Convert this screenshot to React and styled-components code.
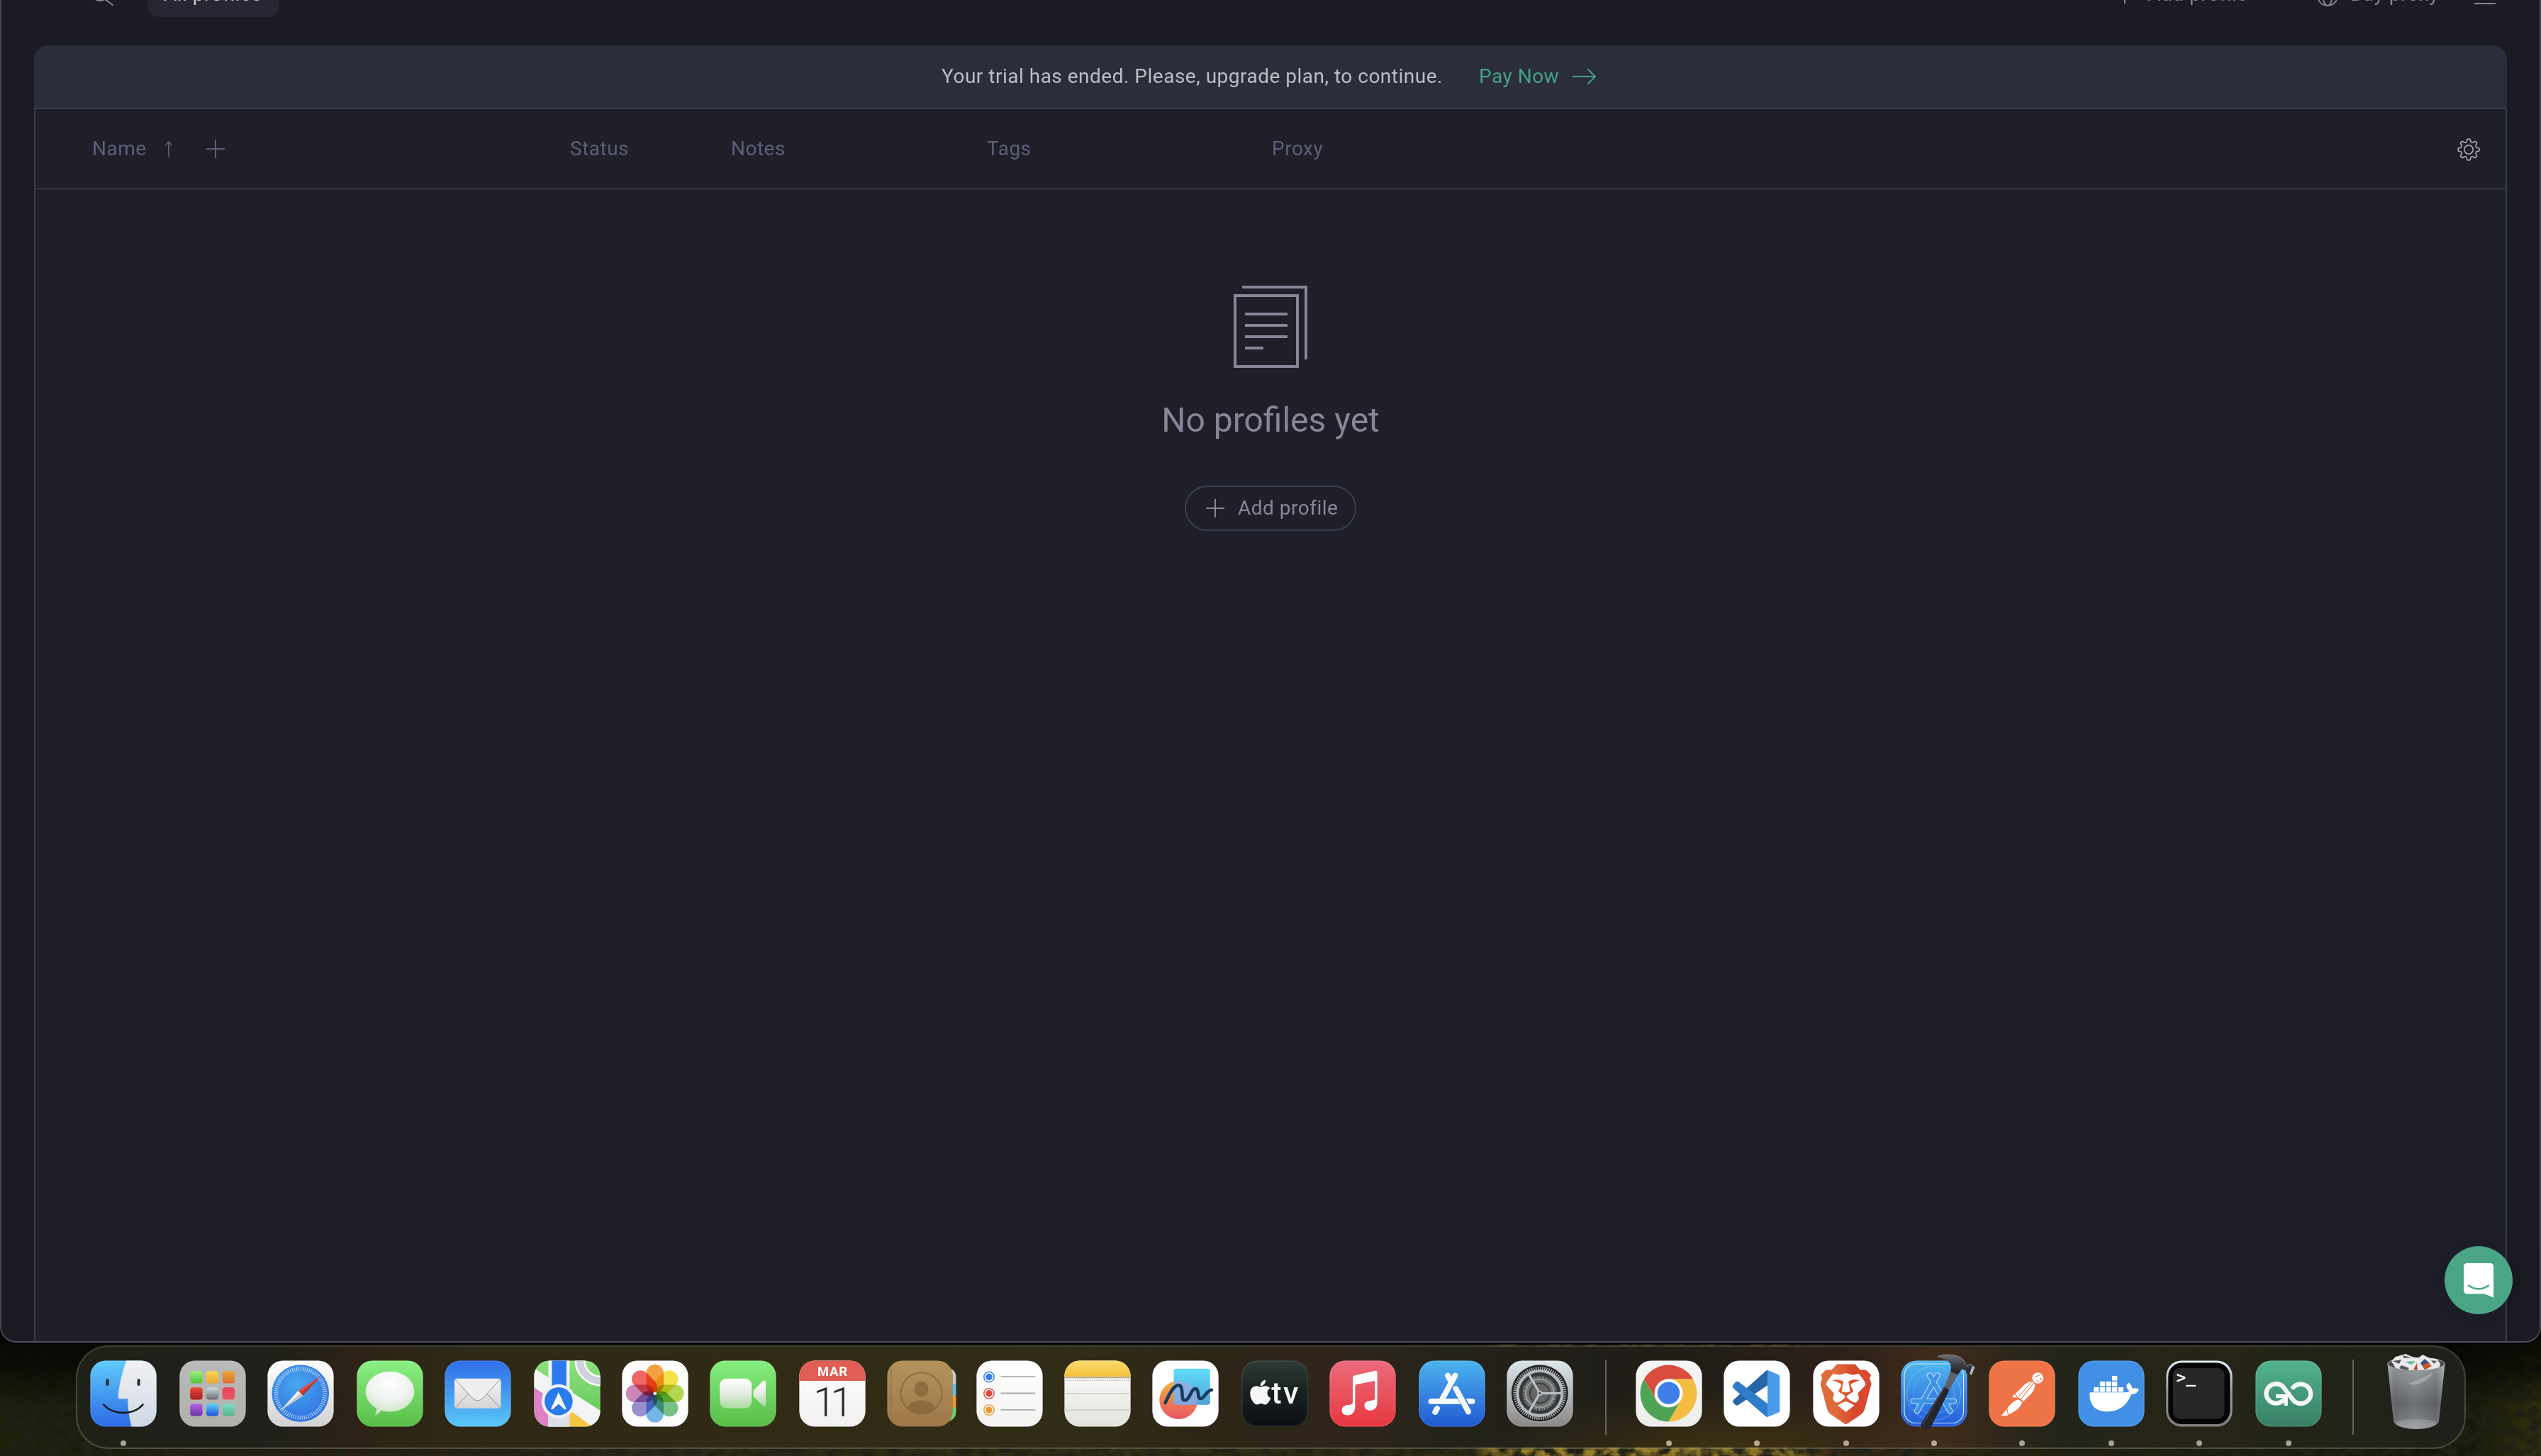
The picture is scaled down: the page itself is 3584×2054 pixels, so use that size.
import React from "react";
import styled, { createGlobalStyle } from "styled-components";
import { FaApple } from "react-icons/fa";
import { SiBrave } from "react-icons/si";

const GlobalStyle = createGlobalStyle`
  * { box-sizing: border-box; }
  html, body { margin: 0; padding: 0; background: #060604; }
  body { font-family: Roboto, "Liberation Sans", sans-serif; overflow: hidden; }
  svg { display: block; overflow: visible; }
`;

const Screen = styled.div`
  position: relative;
  width: 3584px;
  height: 2054px;
  overflow: hidden;
  display: flex;
  flex-direction: column;
`;

const Wallpaper = styled.svg`
  position: absolute;
  left: 0;
  bottom: 0;
  z-index: 0;
`;

const Window = styled.main`
  position: relative;
  z-index: 1;
  height: 1894px;
  flex: none;
  display: flex;
  flex-direction: column;
  padding: 0 46px;
  background: #1b1b23;
  border: 2px solid #47474d;
  border-top: 0;
  border-bottom-color: #53535f;
  border-radius: 0 0 22px 22px;
  box-shadow: 0 1px 0 1px #000;
  overflow: hidden;
`;

const Toolbar = styled.header`
  flex: none;
  display: flex;
  align-items: center;
  height: 64px;
  margin: -40px 0 40px;
  padding: 0 16px 0 80px;
  color: #858396;
`;

const Label = styled.span`
  display: block;
  padding-bottom: 2px;
`;

const Tab = styled.div`
  display: flex;
  align-items: center;
  height: 64px;
  width: 186px;
  margin-left: 48px;
  padding-left: 23px;
  border-radius: 16px;
  background: #262733;
  color: #c9c9d2;
  font-size: 28px;
  letter-spacing: 0.5px;
  white-space: nowrap;
`;

const ToolbarAction = styled.div`
  display: flex;
  align-items: center;
  gap: ${(p) => p.$gap}px;
  margin-right: ${(p) => p.$after}px;
  margin-left: ${(p) => (p.$push ? "auto" : "0")};
  font-size: 28px;
  letter-spacing: 0.5px;
  white-space: nowrap;
`;

const Banner = styled.div`
  flex: none;
  display: flex;
  align-items: center;
  height: 88px;
  padding-left: 1280px;
  border-radius: 20px 20px 0 0;
  background: #2b2d3b;
  color: #bdbdc6;
  font-size: 28px;
  letter-spacing: 0.5px;
  white-space: nowrap;
`;

const PayLink = styled.a`
  display: flex;
  align-items: center;
  gap: 19px;
  margin-left: 51px;
  color: #45a286;
`;

const Table = styled.section`
  flex: 1;
  display: flex;
  flex-direction: column;
  background: #1f1f2a;
  border: 2px solid #3a3c4e;
  border-bottom: 0;
`;

const HeadRow = styled.div`
  flex: none;
  display: grid;
  grid-template-columns: 674px 227px 361px 402px 1fr 32px;
  align-items: center;
  height: 113px;
  padding: 0 36px 0 80px;
  border-bottom: 1px solid #4b4b64;
  color: #5f5e7a;
  font-size: 28px;
  letter-spacing: 0.5px;
`;

const HeadCell = styled.div`
  display: flex;
  align-items: center;
`;

const SortIcon = styled.svg`
  margin-left: 26px;
`;

const PlusIcon = styled.svg`
  margin-left: ${(p) => p.$ml || 0}px;
`;

const Empty = styled.div`
  display: flex;
  flex-direction: column;
  align-items: center;
  padding-top: 136px;
  color: #878598;
`;

const EmptyTitle = styled.h1`
  margin: 46px 0 0;
  font-size: 48px;
  line-height: 56px;
  font-weight: 400;
`;

const AddButton = styled.button`
  display: flex;
  align-items: center;
  gap: 19px;
  width: 242px;
  height: 64px;
  margin-top: 64px;
  padding: 0 0 0 28px;
  border: 2px solid #3b3d51;
  border-radius: 32px;
  background: transparent;
  color: #878598;
  font: 400 28px Roboto, "Liberation Sans", sans-serif;
  letter-spacing: 0.5px;
  white-space: nowrap;
`;

const ChatButton = styled.button`
  position: absolute;
  right: 38px;
  bottom: 38px;
  width: 96px;
  height: 96px;
  display: flex;
  align-items: center;
  justify-content: center;
  padding: 0;
  border: 0;
  border-radius: 50%;
  background: #4aa587;
  box-shadow: 0 2px 12px rgba(0, 0, 0, 0.08), 0 4px 60px rgba(0, 0, 0, 0.16);
`;

const Dock = styled.nav`
  position: relative;
  z-index: 1;
  flex: none;
  display: flex;
  width: 3371px;
  height: 146px;
  margin: 4px 0 0 107px;
  padding: 19px 0 0 18px;
  border: 2px solid rgba(160, 160, 140, 0.36);
  border-radius: 46px;
  background-clip: padding-box;
  background-color: #24221a;
  background-image: radial-gradient(ellipse 340px 90px at 2330px 150px, rgba(72, 56, 16, 0.75), transparent),
    linear-gradient(90deg, #1f2018 0, #20211a 8%, #2c2216 11.5%, #2e2915 16%, #312b15 30%, #302c16 42%,
      #2d2517 49%, #30251a 53%, #24231a 57%, #201e18 64%, #231e17 69%, #2d2119 74%, #402b1b 78%,
      #22241a 83%, #272415 88%, #232416 93%, #20201b 100%);
`;

const DockItem = styled.div`
  flex: none;
  display: flex;
  flex-direction: column;
  align-items: center;
  width: 94px;
  margin-right: ${(p) => p.$gap}px;
`;

const RunningDot = styled.i`
  width: 8px;
  height: 8px;
  margin-top: 19px;
  border-radius: 50%;
  background: ${(p) => p.$tone};
`;

const DockDivider = styled.div`
  flex: none;
  width: 2px;
  height: 106px;
  margin: -1px ${(p) => p.$after}px 0 0;
  background: #66645c;
`;

const TrashSlot = styled.div`
  flex: none;
  width: 82px;
  margin-top: -9px;
`;

const Plus = ({ ml, color = "currentColor" }) => (
  <PlusIcon $ml={ml} width="26" height="26" viewBox="0 0 26 26" fill="none" stroke={color} strokeWidth="2">
    <path d="M13 0V26M0 13H26" />
  </PlusIcon>
);

const Grad = ({ id, a, b, mid }) => (
  <linearGradient id={id} x1="0" y1="0" x2="0" y2="1">
    <stop offset="0" stopColor={a} />
    {mid && <stop offset="0.5" stopColor={mid} />}
    <stop offset="1" stopColor={b} />
  </linearGradient>
);

const Tile = ({ id, a, b, mid, children }) => (
  <svg width="94" height="94" viewBox="0 0 94 94">
    <defs>
      <Grad id={`${id}-bg`} a={a} b={b} mid={mid} />
      <clipPath id={`${id}-clip`}>
        <rect x="0.4" y="0.4" width="93.2" height="93.2" rx="21.5" />
      </clipPath>
    </defs>
    <rect x="0.4" y="0.4" width="93.2" height="93.2" rx="21.5" fill={`url(#${id}-bg)`} />
    <rect x="1" y="1" width="92" height="92" rx="21" fill="none" stroke="#fff" strokeOpacity="0.16" strokeWidth="1" />
    {children}
  </svg>
);

const Finder = () => (
  <Tile id="finder" a="#5fcbf9" b="#2c6ae8">
    <defs><Grad id="finder-face" a="#f1f1f3" b="#cfd8e5" /></defs>
    <g clipPath="url(#finder-clip)">
      <path d="M51.4 0C45 18 40.5 36 39.6 52Q39.6 54.3 42 54.3H53.2C53.2 68 55.5 82 58.6 94H94V0Z" fill="url(#finder-face)" />
    </g>
    <path d="M24.5 28V34M68.6 28V34" stroke="#2a2f38" strokeWidth="4.2" strokeLinecap="round" />
    <path d="M19 62.5C33 78 61 78 74.5 62.5" fill="none" stroke="#17191f" strokeWidth="2.6" strokeLinecap="round" />
  </Tile>
);

const PAD = [
  ["#9df07a", "#55c13c"], ["#f8d84e", "#eea736"], ["#eba63a", "#dd7131"],
  ["#ea4a3a", "#a51d18"], ["#cfd8dd", "#6c6d70"], ["#ea4256", "#e95766"],
  ["#b264e6", "#6b31a6"], ["#5bd5f8", "#2250da"], ["#7fdfd2", "#58b583"],
];
const Launchpad = () => (
  <Tile id="pad" a="#b9bab9" b="#b1b1ab">
    {PAD.map(([a, b], i) => (
      <g key={i}>
        <defs><Grad id={`pad-${i}`} a={a} b={b} /></defs>
        <rect x={15.2 + (i % 3) * 22.7} y={15.2 + Math.floor(i / 3) * 23} width="17.4" height="17.2" rx="4" fill={`url(#pad-${i})`} />
      </g>
    ))}
  </Tile>
);

const Safari = () => (
  <Tile id="safari" a="#ffffff" b="#d2d2d2">
    <defs>
      <radialGradient id="safari-dial" cx="0.45" cy="0.35" r="0.7">
        <stop offset="0" stopColor="#4aa8ef" /><stop offset="1" stopColor="#2b6de0" />
      </radialGradient>
    </defs>
    <circle cx="46.8" cy="46.5" r="40.3" fill="url(#safari-dial)" />
    <circle cx="46.8" cy="46.5" r="34.5" fill="none" stroke="#e4f0fc" strokeWidth="6" strokeDasharray="1 2.01" opacity="0.85" />
    <path d="M75.6 22L43.3 42.9L50.3 50Z" fill="#e5493f" />
    <path d="M75.6 22L46.8 46.5L50.3 50Z" fill="#b93a34" />
    <path d="M19 70.5L43.3 42.9L50.3 50Z" fill="#f4f4f4" />
    <path d="M19 70.5L46.8 46.5L50.3 50Z" fill="#c3c6ca" />
  </Tile>
);

const Messages = () => (
  <Tile id="msg" a="#8af084" b="#59bd48">
    <defs>
      <radialGradient id="msg-b" cx="0.5" cy="0.25" r="0.8">
        <stop offset="0" stopColor="#fff" /><stop offset="0.55" stopColor="#eef2ed" /><stop offset="1" stopColor="#bfe0b6" />
      </radialGradient>
    </defs>
    <path d="M47 15.8c19 0 34.4 12.6 34.4 28.3S66 72.6 47 72.6c-4.5 0-8.5-.6-12.4-1.8C32 74.5 29 77 25.5 77.6c1.7-2.8 2.6-6.3 2.500-9.8C18.5 63 12.7 54 12.7 44.1 12.7 28.4 28 15.8 47 15.8Z" fill="url(#msg-b)" />
  </Tile>
);

const Mail = () => (
  <Tile id="mail" a="#2f6fe9" b="#5ac7f8">
    <defs><Grad id="mail-e" a="#f6f6f6" b="#d3d4d5" /></defs>
    <rect x="14" y="25.7" width="65.5" height="42" rx="4" fill="url(#mail-e)" />
    <path d="M15.5 66.5L34 47M78 66.5L59.5 47" stroke="#8e9195" strokeWidth="1" />
    <path d="M15 27L39 53Q46.7 60.5 54.5 53L78.5 27" fill="#efefef" stroke="#8e9195" strokeWidth="1" />
    <path d="M27 30.5H67" stroke="#d5d5d5" strokeDasharray="1 1" />
  </Tile>
);

const Maps = () => (
  <Tile id="maps" a="#8ee07e" b="#5cc553">
    <g clipPath="url(#maps-clip)">
      <path d="M0 36L24 58V94H0Z" fill="#dd83c4" />
      <path d="M0 11L94 71V94H82L0 38Z" fill="#f4f4f7" />
      <path d="M50 70L83 94H50Z" fill="#f5c63f" />
      <rect x="20.4" y="0" width="30" height="94" fill="#f1f1f5" />
      <rect x="20.4" y="76" width="30" height="18" fill="#dedfe6" />
      <rect x="25.5" y="0" width="20.4" height="50" fill="#2c7bee" />
      <circle cx="94" cy="0" r="29" fill="none" stroke="#fff" strokeWidth="15" />
      <circle cx="94" cy="0" r="29" fill="none" stroke="#ced1db" strokeWidth="10" />
      <circle cx="34.9" cy="57.8" r="24" fill="#eff1f5" />
      <circle cx="34.9" cy="57.8" r="19.8" fill="#2a7bec" />
      <path d="M34.9 45L45.5 68Q45.5 70 43 69L34.9 61.5L26.8 69Q24.3 70 24.3 68Z" fill="#f5f6f8" />
    </g>
  </Tile>
);

const PETALS = ["#f39a35", "#f6e03a", "#b0d346", "#6fbd7c", "#68b0e6", "#9187c9", "#c57fb3", "#f05a58"];
const Petal = styled.rect`
  mix-blend-mode: multiply;
`;
const Bloom = styled.g`
  isolation: isolate;
`;
const Photos = () => (
  <Tile id="photos" a="#ffffff" b="#fbfbfd">
    <Bloom>
      {PETALS.map((c, i) => (
        <Petal key={c} x="34.5" y="5.8" width="24.5" height="40.5" rx="12.2" fill={c} opacity="0.93"
          transform={`rotate(${i * 45} 46.75 46.8)`} />
      ))}
    </Bloom>
    <circle cx="46.75" cy="46.8" r="2.4" fill="#f0eee4" />
  </Tile>
);

const FaceTime = () => (
  <Tile id="ft" a="#85ee80" b="#58bc46">
    <defs><Grad id="ft-b" a="#ffffff" mid="#e6ece5" b="#a8dc9e" /></defs>
    <rect x="14.3" y="25.8" width="45" height="42" rx="9.5" fill="url(#ft-b)" />
    <path d="M62 42L75 29.5Q79 27 79 31V62.5Q79 66.5 75 64L62 51.5Q61 46.8 62 42Z" fill="url(#ft-b)" />
  </Tile>
);

const Calendar = () => (
  <Tile id="cal" a="#ffffff" b="#f1f0ee">
    <path clipPath="url(#cal-clip)" d="M0 0H94V29H0Z" fill="#e05e53" />
    <text x="47" y="22" fontSize="18.5" fontWeight="700" fill="#fff" textAnchor="middle" textLength="42">MAR</text>
    <text x="44.5" y="78.6" fontSize="57" fontWeight="300" fill="#2b2b2b" textAnchor="middle" letterSpacing="-7">11</text>
  </Tile>
);

const Contacts = () => (
  <svg width="94" height="94" viewBox="0 0 94 94">
    <defs><Grad id="con-bg" a="#b3935c" b="#9f774a" /></defs>
    <path d="M84 10Q97.5 12 97.5 24V34H84Z" fill="#c8c8c6" />
    <rect x="84" y="33" width="13.5" height="18" rx="2" fill="#63bdf0" />
    <rect x="84" y="50" width="13.5" height="18" rx="2" fill="#f1952f" />
    <path d="M84 66.5H97.5V72Q97.5 82 88 86Z" fill="#69d76c" />
    <rect x="0.4" y="0.4" width="92.5" height="93.2" rx="21.5" fill="url(#con-bg)" />
    <path d="M6 12V82" stroke="#8a6a3e" strokeWidth="1.2" opacity="0.7" />
    <circle cx="48.6" cy="46.5" r="29" fill="none" stroke="#846539" strokeWidth="1.5" />
    <ellipse cx="48.6" cy="40.5" rx="10" ry="11" fill="#8e6e40" />
    <path d="M28.5 66.5Q33 57 48.6 56.5Q64 57 69 66.5Q60 75.5 48.6 75.5Q37 75.5 28.5 66.5Z" fill="#8e6a40" />
  </svg>
);

const Reminders = () => (
  <Tile id="rem" a="#ffffff" b="#f3f2f0">
    {["#2f7bf0", "#e4493b", "#ea9630"].map((c, i) => (
      <g key={c}>
        <circle cx="18" cy={23.5 + i * 23.3} r="7.2" fill="#fff" stroke={c} strokeWidth="1.4" />
        <circle cx="18" cy={23.5 + i * 23.3} r="4.7" fill={c} />
        <path d={`M34.5 ${23.2 + i * 23.3}H83.2`} stroke="#a9abac" strokeWidth="1.8" />
      </g>
    ))}
  </Tile>
);

const Notes = () => (
  <Tile id="notes" a="#ffffff" b="#e3e1dd">
    <defs><Grad id="notes-top" a="#f9db6b" b="#f4c23d" /></defs>
    <rect clipPath="url(#notes-clip)" width="94" height="23.5" fill="url(#notes-top)" />
    <path d="M0.5 24.3H93.5" stroke="#a9a79e" strokeWidth="1.8" />
    <path d="M3 28.3H92" stroke="#b6b4ae" strokeWidth="1.4" strokeDasharray="1.5 1.5" />
    <path d="M0.5 46.8H93.5M0.5 70.2H93.5" stroke="#cfcecc" strokeWidth="1.4" />
  </Tile>
);

const Freeform = () => (
  <Tile id="free" a="#ffffff" b="#ffffff">
    <defs>
      <Grad id="free-c" a="#f3b43f" mid="#ee8150" b="#e85664" />
      <Grad id="free-s" a="#62dcfb" b="#4fa3d6" />
      <clipPath id="free-clip2"><rect x="30.6" y="11.7" width="51.2" height="51" rx="3.5" /></clipPath>
    </defs>
    <circle cx="37.3" cy="56" r="27" fill="url(#free-c)" />
    <rect x="30.6" y="11.7" width="51.2" height="51" rx="3.5" fill="url(#free-s)" />
    <circle cx="37.3" cy="56" r="27" fill="#a9a7dc" opacity="0.6" clipPath="url(#free-clip2)" />
    <path d="M18.5 60C24 48 30 35.5 37 35C46 35 39 57 46.5 56.5C53 56 55 40 61 40C67 40 63 54 68.5 54C74 54 76 43 84 41.8" fill="none" stroke="#173a5c" strokeWidth="4.6" strokeLinecap="round" strokeLinejoin="round" />
  </Tile>
);

const AppleTv = () => (
  <Tile id="tv" a="#2f3a36" mid="#172020" b="#0c1013">
    <FaApple x="7" y="25.4" size={39.5} color="#f8f8f8" />
    <text x="42.3" y="61" fontSize="43" fontWeight="500" fill="#f8f8f8" textLength="38">tv</text>
  </Tile>
);

const Music = () => (
  <Tile id="music" a="#eb6b7c" b="#e73840">
    <path d="M33 24Q33 22 35 21.5L65 14.8Q67.6 14.3 67.6 16.8V59.5C67.6 66.5 63.5 70.8 57.5 70.8C52.5 70.8 49.5 67.8 49.5 64C49.5 59.5 53 57.5 57 57C62 56.5 64.2 56 64.2 53V30.5Q64.2 28.8 62.5 29.2L38 34Q36.4 34.3 36.4 36V65.5C36.4 73 32 77.5 26 77.5C20.5 77.5 17.5 74.5 17.5 70.5C17.5 66.5 20.5 64 25 63.3C30.5 62.5 33 62.5 33 58.5Z" fill="#fff" />
  </Tile>
);

const AppStore = () => (
  <Tile id="store" a="#4db4ee" b="#2159d3">
    <g stroke="#f6f9fd" strokeWidth="7.8" strokeLinecap="round">
      <path d="M41 21.5L46 30.5" />
      <path d="M51.5 21.5L33 55" />
      <path d="M26 68L23.2 73" />
      <path d="M17.5 57.8H75.5" />
    </g>
    <path d="M51.5 37L71 72.5" stroke="#3a83e2" strokeWidth="10" />
    <path d="M52.5 40L70 72.5" stroke="#f6f9fd" strokeWidth="7.8" strokeLinecap="round" />
  </Tile>
);

const Settings = () => (
  <Tile id="set" a="#dbe6ec" mid="#b4b9bb" b="#8b8785">
    <circle cx="46.8" cy="46.5" r="40.5" fill="#1e1f20" stroke="#bfc3c5" strokeWidth="1" />
    <circle cx="46.8" cy="46.5" r="35.3" fill="none" stroke="#aeb2b4" strokeWidth="4.5" strokeDasharray="1.5 1.58" />
    <circle cx="46.8" cy="46.5" r="31.5" fill="#37393a" stroke="#b4b8ba" strokeWidth="4" />
    <circle cx="46.8" cy="46.5" r="20" fill="#6d6e6f" stroke="#96999a" strokeWidth="2.5" />
    <circle cx="46.8" cy="46.5" r="22.8" fill="none" stroke="#a1a4a6" strokeWidth="3" strokeDasharray="1 1.2" />
    <circle cx="46.8" cy="46.5" r="14" fill="#646566" stroke="#3c3d3e" strokeWidth="2" />
    <g stroke="#bcc0c2" strokeWidth="3.2">
      {[0, 120, 240].map((a) => (
        <path key={a} d="M46.8 46.5H77" transform={`rotate(${a} 46.8 46.5)`} />
      ))}
    </g>
    <circle cx="46.8" cy="46.5" r="3.6" fill="#bcc0c2" />
    <circle cx="46.8" cy="46.5" r="1.4" fill="#333" />
  </Tile>
);

const Chrome = () => (
  <Tile id="chrome" a="#f6f6f6" b="#ededeb">
    <path d="M11.9 26.5A40 40 0 0 1 81.1 26.5H46.5A20 20 0 0 0 29.2 56.5Z" fill="#d94c3d" />
    <path d="M81.1 26.5A40 40 0 0 1 46.5 86.5L63.8 56.5A20 20 0 0 0 46.5 26.5Z" fill="#f4bd42" />
    <path d="M46.5 86.5A40 40 0 0 1 11.9 26.5L29.2 56.5A20 20 0 0 0 63.8 56.5Z" fill="#4fa355" />
    <circle cx="46.5" cy="46.2" r="19.6" fill="#fff" />
    <circle cx="46.5" cy="46.2" r="15.7" fill="#3f7fe8" />
  </Tile>
);

const VsCode = () => (
  <Tile id="vs" a="#ffffff" b="#ffffff">
    <path d="M60.5 14.3Q62 14 62.5 15V35L21 63Q19 64.3 17 63L13.8 60Q12.3 58 13.8 56Z" fill="#2766a7" />
    <path d="M13.8 34L17.5 30.3Q19.5 29 21.5 30.5L62.5 61.5V79Q61.5 80.5 59.5 79L13.8 39.5Q12.3 36.5 13.8 34Z" fill="#2f7cc8" />
    <path d="M62 13.8L77.5 20.3Q79.3 21.5 79.3 23V71.5Q79.3 73 77.5 73.8L62 80Q58.5 80.5 62 78Z" fill="#4a9cea" />
  </Tile>
);

const Brave = () => (
  <Tile id="brave" a="#ffffff" b="#ffffff">
    <defs>
      <linearGradient id="brave-f" gradientUnits="userSpaceOnUse" x1="2" x2="22" y1="0" y2="0">
        <stop offset="0.3" stopColor="#de6b3b" /><stop offset="0.65" stopColor="#d9492f" />
      </linearGradient>
    </defs>
    <SiBrave x="4.4" y="5.4" size={84.5} fill="url(#brave-f)" />
  </Tile>
);

const Xcode = () => (
  <Tile id="xc" a="#4fb9ee" b="#235adb">
    <defs>
      <Grad id="xc-h" a="#6d7077" mid="#3a3c41" b="#1d1e22" />
    </defs>
    <rect x="5" y="5" width="83.5" height="83.5" rx="16" fill="none" stroke="#d6ecfb" strokeWidth="1.2" />
    <circle cx="46.5" cy="46.5" r="38" fill="none" stroke="#9fd0f6" strokeOpacity="0.5" />
    <circle cx="46.5" cy="46.5" r="29" fill="none" stroke="#9fd0f6" strokeOpacity="0.4" />
    <g strokeLinecap="round">
      {[["#c7e3fa", 8], ["#3f93e6", 6]].map(([c, w]) => (
        <path key={c} d="M41 21.5L69.5 71.5M51.5 21.5L23 71.5M17.5 57.8H75" stroke={c} strokeWidth={w} />
      ))}
    </g>
    <path d="M61 39L71 13L82 17L68.5 42Z" fill="#5d6168" />
    <path d="M61 37.5L68.5 42L42 95.5Q38 99.5 32 96.5Q27.5 94 28.5 90Z" fill="#24262b" />
    <path d="M61.5 38.5L31 91" stroke="#4d5056" strokeWidth="1.2" />
    <path d="M52 -5C62 -9.500 78 -8.500 86 -2.500Q91 1.500 91 6L94 8L98 5.5L104 9.5L99.5 21L92.5 18L91.500 14L86 12.5L81 20L70 16Q73 8 68 2.5Q62 -2.5 52 -5Z" fill="url(#xc-h)" />
    <path d="M52 -5C62 -9.500 78 -8.500 86 -2.500Q91 1.500 91 6L94 8L98 5.500L104 9.500" fill="none" stroke="#8d9097" strokeWidth="1" />
    <path d="M100.5 8.5L104.500 9.7L99.8 21L96.8 19.500Z" fill="#b3b6bd" />
  </Tile>
);

const Postman = () => (
  <Tile id="pm" a="#ee7447" b="#ee7447">
    <g fill="#fff">
      <circle cx="69.2" cy="25" r="7.8" />
      <path d="M60.5 29.5L65.5 34.5Q64.5 42 60 47L49 58L43.5 53L32.5 52L45 40Q52 31 60.5 29.5Z" />
      <path d="M41.5 55L47.5 59Q44 68 35.5 72.5L26 78H17.5L25 70Q30 60 41.5 55Z" />
    </g>
    <path d="M61 30L41 52.5M63 32.5L45.5 55M37 47L40.5 53M26 69L27.5 77M65 24L73 20M67.5 27L71 31" fill="none" stroke="#ee7447" strokeWidth="1.1" />
    <circle cx="73.5" cy="26" r="1.3" fill="#ee7447" />
  </Tile>
);

const CRATES = [[3, 0], [1, 1], [2, 1], [3, 1], [0, 2], [1, 2], [2, 2], [3, 2], [4, 2]];
const Docker = () => (
  <Tile id="dk" a="#4190e6" b="#4190e6">
    <g fill="#fff">
      {CRATES.map(([c, r]) => (
        <rect key={`${c}${r}`} x={22.2 + c * 8.6} y={22 + r * 8} width="7.3" height="6.6" />
      ))}
      <path d="M16.3 46.5Q16.5 45.3 18 45.3H66C69 45.3 71 44.5 72.3 43C67.5 39 67 34.5 71.5 31.5C74.5 33.5 76.3 36.5 76.5 39.8C79.5 38.8 83 39.3 86 40.8C84.5 45.5 81 48 75 48C70 62 59 72.3 41.5 72.3C25 72.3 16.3 64 16.3 46.5Z" />
    </g>
  </Tile>
);

const Terminal = () => (
  <Tile id="term" a="#d5eaf1" mid="#8b8f92" b="#77777a">
    <rect x="3.3" y="3.6" width="87" height="86.5" rx="19" fill="#050505" />
    <rect x="10" y="10.7" width="72.5" height="72" rx="10" fill="#272727" />
    <text x="14.5" y="31.5" fontFamily='"DejaVu Sans Mono", "Liberation Mono", monospace' fontSize="23" fontWeight="700" fill="#fff">&gt;_</text>
  </Tile>
);

const GoLogin = () => (
  <Tile id="go" a="#51b38e" b="#397f65">
    <g fill="none" stroke="#f4f5f5" strokeWidth="6.3">
      <path d="M52 40.5A14 13.7 0 1 1 53.8 56.5L39 37A14 13.7 0 1 0 28.8 60.7Q35 61 42.5 54.5" />
      <path d="M29 50.5H45.8" strokeWidth="5.2" />
      <path d="M43.3 48.5V64" strokeWidth="5.2" />
    </g>
  </Tile>
);

const Trash = () => (
  <svg width="82" height="108" viewBox="0 0 82 108">
    <defs>
      <linearGradient id="bin" x1="0" x2="1" y1="0" y2="0">
        <stop offset="0" stopColor="#a0a3a6" /><stop offset="0.12" stopColor="#75797c" />
        <stop offset="0.5" stopColor="#8b8f92" /><stop offset="0.85" stopColor="#6f7376" /><stop offset="1" stopColor="#a8abae" />
      </linearGradient>
      <linearGradient id="bin-shade" x1="0" x2="0" y1="0" y2="1">
        <stop offset="0" stopColor="#c9cbcd" stopOpacity="0.35" /><stop offset="0.6" stopColor="#34383b" stopOpacity="0.35" />
        <stop offset="0.85" stopColor="#5d6164" stopOpacity="0.3" /><stop offset="1" stopColor="#b9bcbe" stopOpacity="0.4" />
      </linearGradient>
    </defs>
    <ellipse cx="41" cy="14" rx="40.5" ry="9" fill="#4c4e50" stroke="#a5a8aa" />
    <path d="M6 10L12 4L26 0L38 5L44 6L50 1L60 6L70 7L75 14L73 21L55 25H30L12 20Z" fill="#e9e9e9" />
    <path d="M8 10L20 8L17 14ZM22 2L34 5L24 6ZM20 16L31 20L28 24L17 20ZM62 9L70 10L66 14Z" fill="#55575a" />
    <path d="M26 11L39 10L33 15Z" fill="#4db5e2" />
    <path d="M32 10.5L40 11L34 15Z" fill="#7dcb4c" />
    <path d="M47 13L53 7L60 13L53 22Z" fill="#33508f" />
    <path d="M49 16L57 12L63 17L54 22Z" fill="#c4592c" />
    <path d="M37 22L42 13L43 24Z" fill="#b3543f" />
    <path d="M0.5 14C8 26 74 26 81.5 14L73 94C71 110 11 110 9 94Z" fill="url(#bin)" />
    <path d="M0.5 14C8 26 74 26 81.5 14L73 94C71 110 11 110 9 94Z" fill="url(#bin-shade)" />
    <path d="M30 42Q50 34 65 26Q58 40 36 44Z" fill="#d9dbdc" opacity="0.35" />
    <ellipse cx="41" cy="98" rx="29" ry="6" fill="#b6b9bb" opacity="0.35" />
  </svg>
);

const SYSTEM_APPS = [
  [Finder, 32, true], [Launchpad, 30], [Safari, 32], [Messages, 30], [Mail, 32], [Maps, 30], [Photos, 30],
  [FaceTime, 32], [Calendar, 30], [Contacts, 32], [Reminders, 30], [Notes, 30], [Freeform, 32], [AppleTv, 30],
  [Music, 32], [AppStore, 30], [Settings, 45],
];
const USER_APPS = [
  [Chrome, 30, "#b5a994"], [VsCode, 32, "#b5a994"], [Brave, 30, "#b6a593"], [Xcode, 30, "#b9a592"],
  [Postman, 32, "#a5a494"], [Docker, 30, "#a5a494"], [Terminal, 32, "#a5a494"], [GoLogin, 43, "#a5a494"],
];

const Foliage = () => (
  <Wallpaper width="3584" height="190" viewBox="0 0 3584 190">
    <defs>
      <linearGradient id="hill" x1="0" x2="1" y1="0" y2="0">
        <stop offset="0" stopColor="#23270c" /><stop offset="0.03" stopColor="#20230c" />
        <stop offset="0.12" stopColor="#2f2310" /><stop offset="0.25" stopColor="#33301a" />
        <stop offset="0.45" stopColor="#3d3917" /><stop offset="0.58" stopColor="#3c3414" />
        <stop offset="0.59" stopColor="#b3962e" /><stop offset="0.7" stopColor="#b3962e" />
        <stop offset="0.72" stopColor="#4d331a" /><stop offset="0.8" stopColor="#28280f" />
        <stop offset="0.97" stopColor="#191a08" /><stop offset="1" stopColor="#3c3e0d" />
      </linearGradient>
      <linearGradient id="dusk" x1="0" x2="0" y1="0" y2="1">
        <stop offset="0" stopColor="#000" stopOpacity="0.9" />
        <stop offset="0.35" stopColor="#000" stopOpacity="0.65" />
        <stop offset="0.65" stopColor="#000" stopOpacity="0.2" />
        <stop offset="1" stopColor="#000" stopOpacity="0.15" />
      </linearGradient>
      <filter id="leaves" x="0" y="0" width="1" height="1">
        <feTurbulence type="fractalNoise" baseFrequency="0.06 0.08" numOctaves="4" seed="8" />
        <feColorMatrix values="0 0 0 0 0.02  0 0 0 0 0.02  0 0 0 0 0.01  2.6 0 0 0 -0.8" />
      </filter>
    </defs>
    <rect width="3584" height="190" fill="url(#hill)" />
    <rect width="3584" height="190" filter="url(#leaves)" />
    <rect width="3584" height="190" fill="url(#dusk)" />
  </Wallpaper>
);

export default function App() {
  return (
    <Screen>
      <GlobalStyle />
      <Foliage />
      <Window>
        <Toolbar>
          <svg width="32" height="32" viewBox="0 0 32 32" fill="none" stroke="currentColor" strokeWidth="2">
            <circle cx="13" cy="13" r="12" />
            <path d="M20 23L31.5 31.5" />
          </svg>
          <Tab><Label>All profiles</Label></Tab>
          <ToolbarAction $push $gap={19} $after={97}>
            <Plus />
            <Label>Add profile</Label>
          </ToolbarAction>
          <ToolbarAction $gap={17} $after={50}>
            <svg width="30" height="30" viewBox="0 0 30 30" fill="none" stroke="currentColor" strokeWidth="2">
              <circle cx="15" cy="17" r="14" />
              <ellipse cx="15" cy="17" rx="6.5" ry="14" />
              <path d="M1 17H29" />
            </svg>
            <Label>Buy proxy</Label>
          </ToolbarAction>
          <svg width="30" height="28" viewBox="0 0 30 28" stroke="currentColor" strokeWidth="2">
            <path d="M0 1H30M0 14H30M0 27H30" />
          </svg>
        </Toolbar>

        <Banner>
          <Label>Your trial has ended. Please, upgrade plan, to continue.</Label>
          <PayLink>
            <Label>Pay Now</Label>
            <svg width="33" height="22" viewBox="0 0 33 22" fill="none" stroke="currentColor" strokeWidth="2">
              <path d="M0 11H32M21.5 0.5L32 11L21.5 21.5" />
            </svg>
          </PayLink>
        </Banner>

        <Table>
          <HeadRow>
            <HeadCell>
              <Label>Name</Label>
              <SortIcon width="10" height="23" viewBox="0 0 10 23" fill="none" stroke="currentColor" strokeWidth="1.8">
                <path d="M5 1V23M0.5 6L5 1L9.5 6" />
              </SortIcon>
              <Plus ml={48} />
            </HeadCell>
            <HeadCell><Label>Status</Label></HeadCell>
            <HeadCell><Label>Notes</Label></HeadCell>
            <HeadCell><Label>Tags</Label></HeadCell>
            <HeadCell><Label>Proxy</Label></HeadCell>
            <svg width="32" height="36" viewBox="0 -2 32 34" fill="none" stroke="#b4b4c2" strokeWidth="1.5" strokeLinejoin="round">
              <path d="M13.4 3.6Q13.4 0.9 16 0.9Q18.6 0.9 18.6 3.6Q18.6 5.4 20.2 6Q21.8 6.6 23 5.4Q24.9 3.5 26.7 5.3Q28.5 7.1 26.6 9Q25.4 10.2 26 11.8Q26.6 13.4 28.4 13.4Q31.1 13.4 31.1 16Q31.1 18.6 28.4 18.6Q26.6 18.6 26 20.2Q25.4 21.8 26.6 23Q28.5 24.9 26.7 26.7Q24.9 28.5 23 26.6Q21.8 25.4 20.2 26Q18.6 26.6 18.6 28.4Q18.6 31.1 16 31.1Q13.4 31.1 13.4 28.4Q13.4 26.6 11.8 26Q10.2 25.4 9 26.6Q7.1 28.5 5.3 26.7Q3.5 24.9 5.4 23Q6.6 21.8 6 20.2Q5.4 18.6 3.6 18.6Q0.9 18.6 0.9 16Q0.9 13.4 3.6 13.4Q5.4 13.4 6 11.8Q6.6 10.2 5.4 9Q3.5 7.1 5.3 5.3Q7.1 3.5 9 5.4Q10.2 6.6 11.8 6Q13.4 5.4 13.4 3.6Z" />
              <circle cx="16" cy="16" r="6.2" />
            </svg>
          </HeadRow>
          <Empty>
            <svg width="104" height="116" viewBox="0 0 104 116" fill="none" stroke="currentColor" strokeWidth="4">
              <rect x="2" y="14" width="88" height="100" />
              <path d="M12 2H102V104M16 40H76M16 56H76M16 72H76M16 88H42" />
            </svg>
            <EmptyTitle>No profiles yet</EmptyTitle>
            <AddButton>
              <Plus />
              <Label>Add profile</Label>
            </AddButton>
          </Empty>
        </Table>

        <ChatButton aria-label="Open chat">
          <svg width="42" height="49" viewBox="0 0 42 49">
            <path d="M5 0H37Q42 0 42 5V48.5Q36 46 29 43.3H5Q0 43.3 0 38.3V5Q0 0 5 0Z" fill="#fff" />
            <path d="M7 31.5Q21 41 35 31.5" fill="none" stroke="#4aa587" strokeWidth="2.6" strokeLinecap="round" />
          </svg>
        </ChatButton>
      </Window>

      <Dock>
        {SYSTEM_APPS.map(([Icon, gap, running], i) => (
          <DockItem key={i} $gap={gap}>
            <Icon />
            {running && <RunningDot $tone="#a3a295" />}
          </DockItem>
        ))}
        <DockDivider $after={41} />
        {USER_APPS.map(([Icon, gap, tone], i) => (
          <DockItem key={i} $gap={gap}>
            <Icon />
            <RunningDot $tone={tone} />
          </DockItem>
        ))}
        <DockDivider $after={47} />
        <TrashSlot>
          <Trash />
        </TrashSlot>
      </Dock>
    </Screen>
  );
}
